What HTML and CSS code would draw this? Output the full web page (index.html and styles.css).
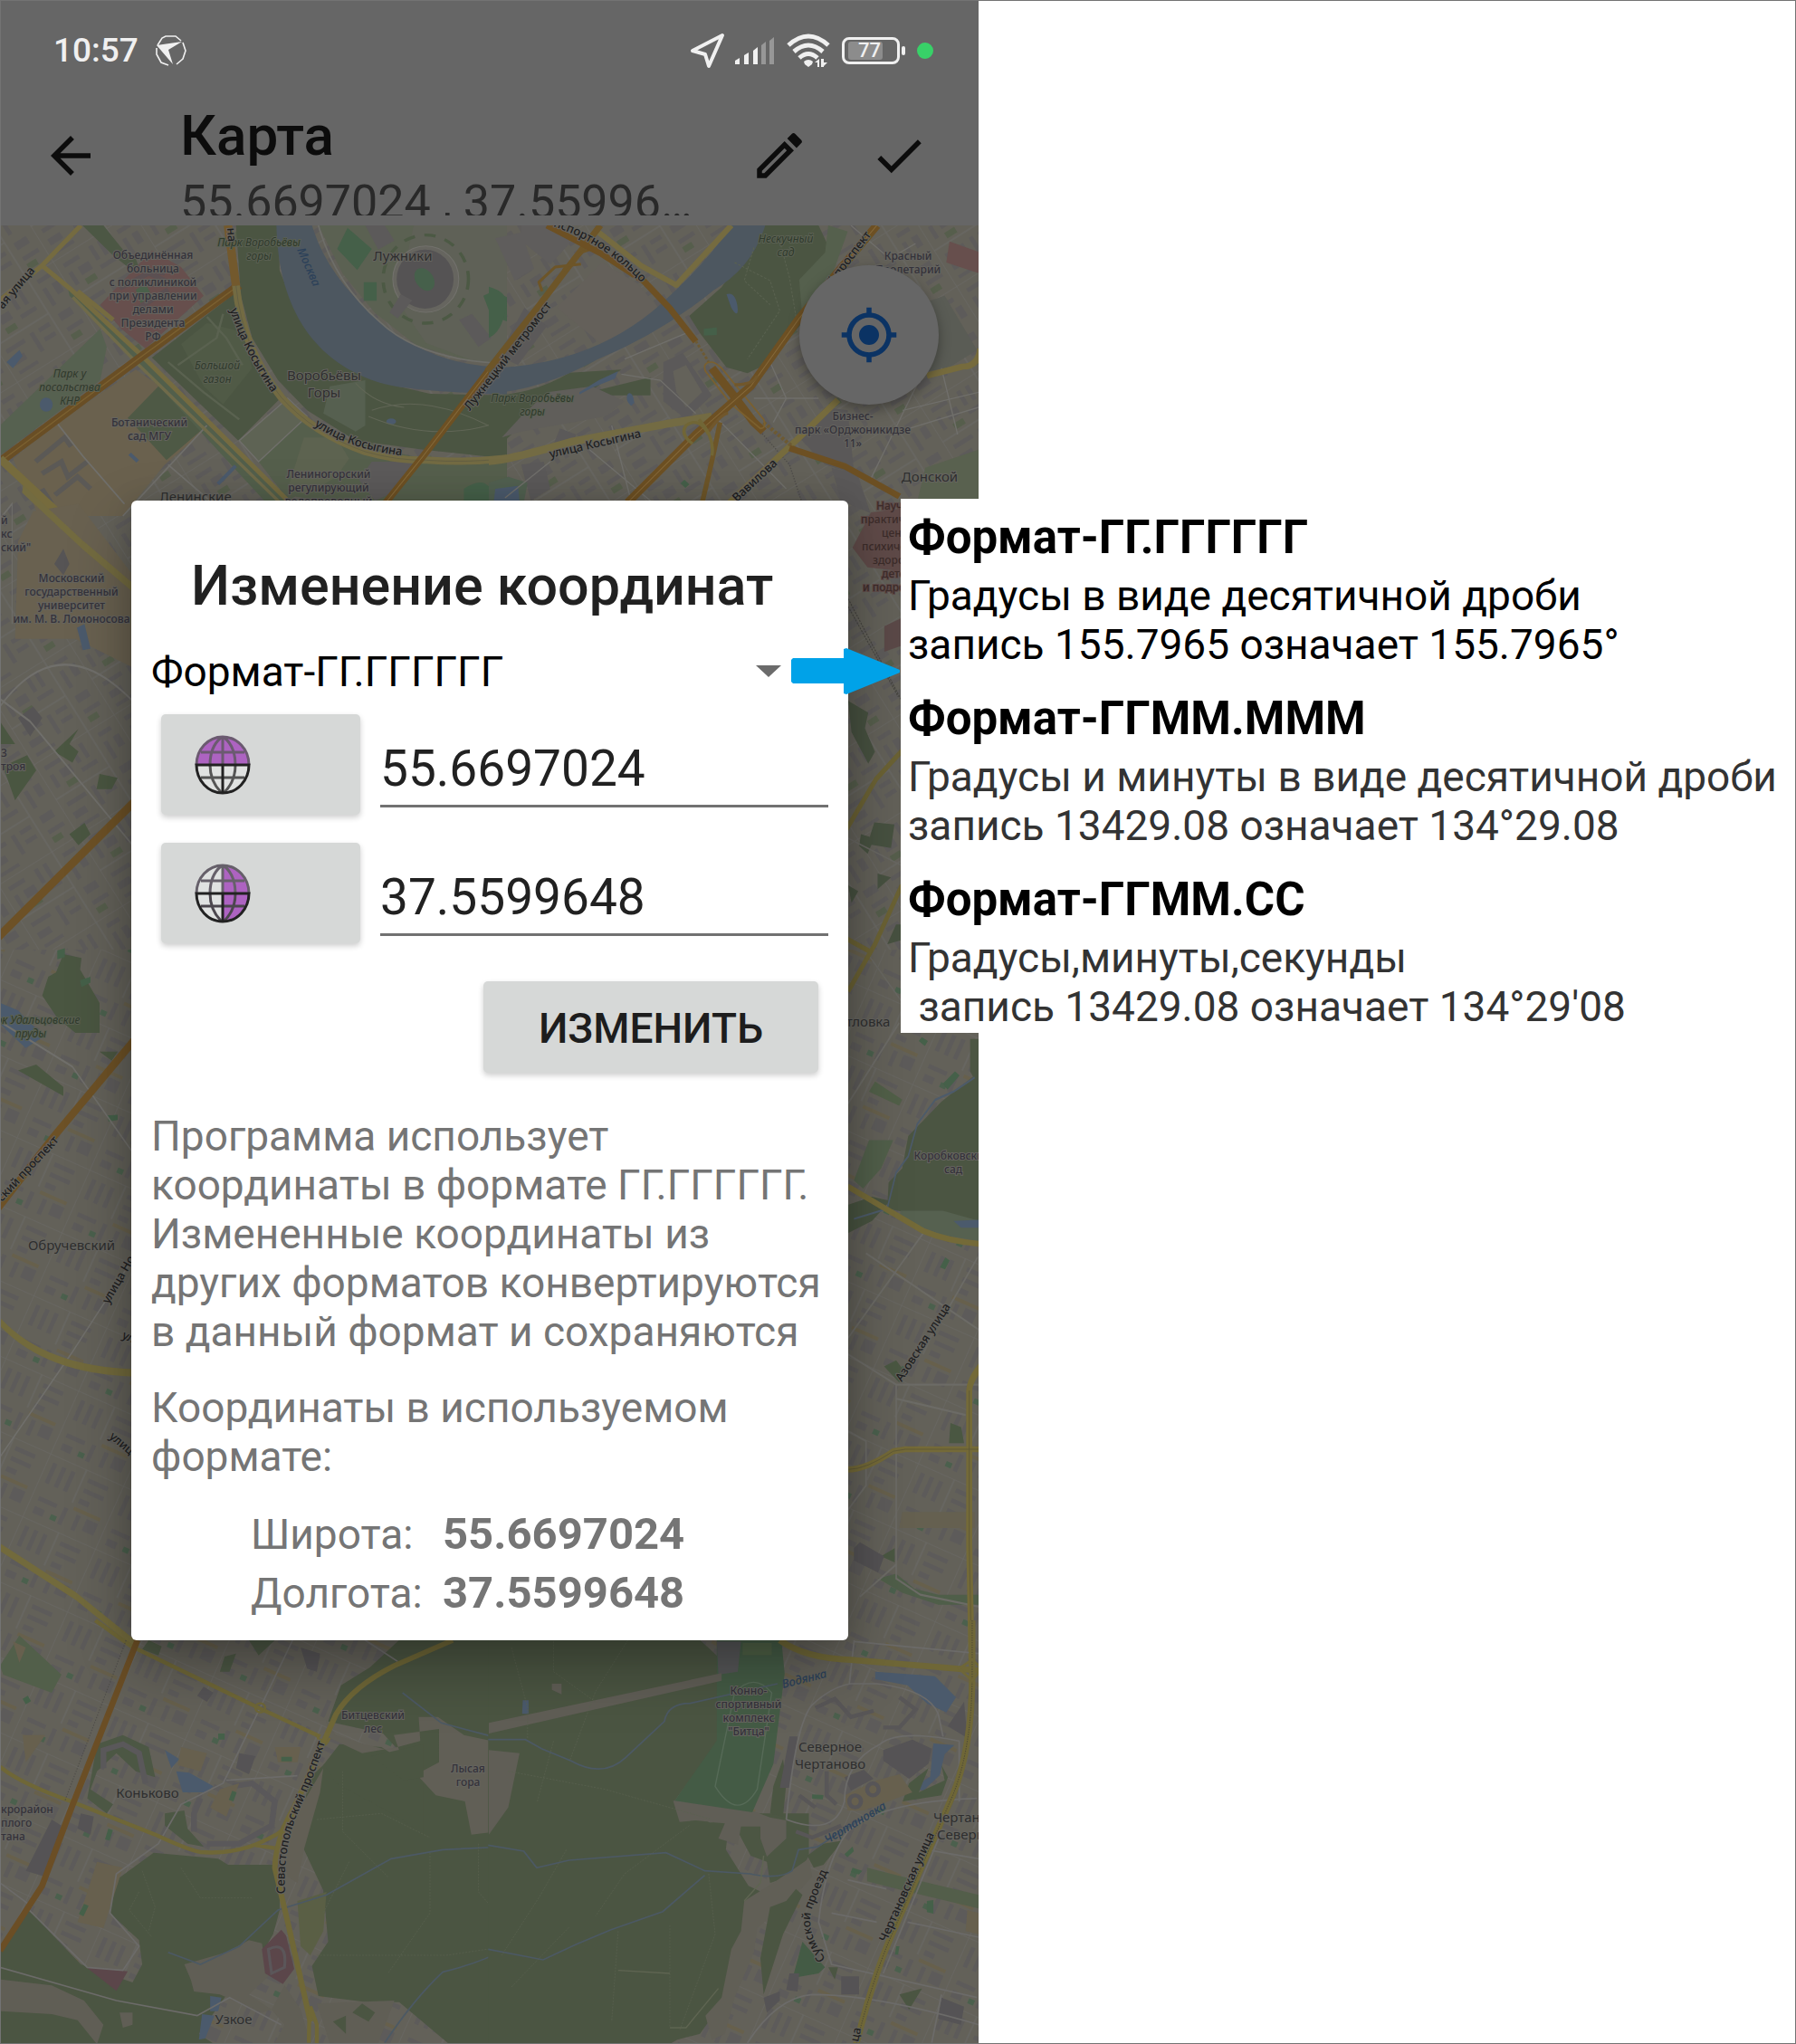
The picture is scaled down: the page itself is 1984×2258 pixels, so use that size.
FILE: index.html
```html
<!DOCTYPE html>
<html lang="ru">
<head>
<meta charset="utf-8">
<meta name="viewport" content="width=device-width, initial-scale=1">
<title>Карта</title>
<link rel="stylesheet" href="styles.css">
</head>
<body>
<div class="page">
<main class="phone">
  <header class="top">
    <div class="status">
      <span class="clock">10:57</span>
      <svg class="brand" width="36" height="36" viewBox="0 0 36 36"><path d="M3 12 8 4l4-2h11l6 5M31 9l3 9-3 9-7 6M15 34 7 31l-5-9v-7" fill="none" stroke="#f0f0f0" stroke-width="1.6"/><path d="M2 12 30 8 15 17l5 16z" fill="#f0f0f0"/></svg>
      <span class="spacer"></span>
      <svg width="40" height="40" viewBox="0 0 40 40"><path d="M36 3 3 20l14 4 4 13z" fill="none" stroke="#f0f0f0" stroke-width="4" stroke-linejoin="round"/></svg>
      <svg class="signal" width="46" height="32" viewBox="0 0 46 32"><path d="M1 31v-4l5-3v7zM11 31V21l5-3v13zM21 31V16l5-4v19z" fill="#f0f0f0"/><path d="M30 31V10l5-4v25zM39 31V5l5-4v30z" fill="#979797"/></svg>
      <svg class="wifi" width="48" height="38" viewBox="0 0 48 38"><g fill="none" stroke="#f0f0f0" stroke-width="5"><path d="M2 13Q24-7 46 13"/><path d="M8 20q16-14 32 0"/><path d="M14 27q10-9 20 0"/></g><path d="M19 31q5-4 10 0l-1 3-4 3-4-3zM31 32l5-4v9h-2v-5zm7-4h3v4l4 0-4 4v1h-3z" fill="#f0f0f0"/></svg>
      <span class="battery"><span>77</span></span>
      <span class="live"></span>
    </div>
    <div class="appbar">
      <button class="icon" aria-label="Назад"><svg viewBox="0 0 24 24"><path d="M20 11H7.83l5.59-5.59L12 4l-8 8 8 8 1.410-1.410L7.830 13H20z"/></svg></button>
      <div class="heading">
        <h1>Карта</h1>
        <p>55.6697024 , 37.55996…</p>
      </div>
      <button class="icon" aria-label="Редактировать"><svg viewBox="0 0 24 24"><path fill-rule="evenodd" d="M3 17.250V21h3.750L17.810 9.940l-3.750-3.750zM5.920 19H5v-.92l9.060-9.060.92.92zM20.710 5.630l-2.340-2.340a1 1 0 0 0-1.410 0l-1.830 1.830 3.750 3.750 1.830-1.830a1 1 0 0 0 0-1.410z"/></svg></button>
      <button class="icon" aria-label="Готово"><svg viewBox="0 0 24 24"><path d="M9 16.170 4.830 12l-1.420 1.410L9 19 21 7l-1.410-1.410z"/></svg></button>
    </div>
  </header>

  <section class="map">
    <svg class="tiles" viewBox="1 249 1080 2008" preserveAspectRatio="xMidYMin slice" aria-hidden="true">
      <defs>
        <pattern id="city" width="104" height="92" patternUnits="userSpaceOnUse" patternTransform="rotate(-32)">
          <path d="M0 0H104M0 46H70M0 0V92M70 0V92" stroke="#696863" stroke-width="1.500" fill="none"/>
          <path d="M8 8h20v5H8zM8 20h5v16H8zM20 20h14v10H20zM42 7h5v18h-5zM53 7h5v18h-5zM42 31h20v5H42zM78 8h16v5H78zM78 20h5v22h-5zM90 20h8v14h-8zM8 55h24v5H8zM8 68h16v8H8zM40 54h5v24h-5zM51 54h14v5H51zM51 66h14v5H51zM78 52h16v9H78zM78 70h20v5H78zM8 83h24v4H8z" fill="#5d5b5a"/>
          <path d="M20 35h13v7H20zM78 79h12v7H78z" fill="#565e4c"/>
        </pattern>
        <pattern id="rows" width="88" height="76" patternUnits="userSpaceOnUse" patternTransform="rotate(24)">
          <path d="M0 0H88M0 0V76M44 0V40" stroke="#696863" stroke-width="1.500" fill="none"/>
          <path d="M7 8h5v24H7zM18 8h5v24h-5zM29 8h5v24h-5zM50 8h24v5H50zM50 20h24v5H50zM50 32h12v6H50zM8 48h22v5H8zM8 60h12v8H8zM38 48h5v20h-5zM54 50h5v18h-5zM66 50h14v14H66z" fill="#5d5b5a"/>
          <path d="M28 61h7v6h-7z" fill="#4b604d"/>
          <path d="M48 43h32v4H48z" fill="#67604c"/>
        </pattern>
      </defs>
      <rect x="0" y="249" width="1082" height="2010" fill="#636159"/>
      <rect x="0" y="249" width="1082" height="800" fill="url(#city)"/>
      <rect x="0" y="1049" width="1082" height="1210" fill="url(#rows)"/>

      <g transform="translate(0 240) scale(.35714 .33333)">
        <path d="M255 27h65l60 80 40 30 20 60-30-20-60-50z" fill="#4c5744"/>
        <path d="M0 690 310 370l20 60-20 110L0 790z" fill="#566150"/>
        <path d="M180 680 420 505l75 55L640 700 510 820 380 990H120L40 800z" fill="#6a614e"/>
        <path d="m490 560 150 130-125 115-120-140z" fill="#4e5945"/>
        <path d="M210 235 440 455l200 230 260 270-60 10L430 490 215 260z" fill="#525f4b"/>
        <path d="M470 465 722 255l35 145 110 200-130 140z" fill="#4b5542"/>
        <path d="M560 420 640 350l110 30 30 120-90 120-60-60z" fill="#505a46"/>
        <path d="M640 330l60 70 50 90M520 480l110 100 110 90M690 320l-20 80-120 90" fill="none" stroke="#5a6250" stroke-width="7"/>
        <path d="M730 27h130l5 150 50 130 85 120 170 118 160 40 238 5v210l-258-30-210-30-150-100-90-100-80-140-35-140z" fill="#4b5542"/>
        <path d="M1020 560l110-20v150l-30 20-100-60z" fill="#566050"/>
        <path d="M940 660 800 810l80 110 120 20 568 50V800h-258l-210-50z" fill="#555f4c"/>
        <path d="M940 730l100 0 40 70-40 60-90 60-60-20z" fill="#5d6350"/>
        <path d="M1150 810h130l-60 100-60 30-50-70z" fill="#5c5a5a"/>
        <path d="M985 27h583v460l-128-15-150-45-130-110-100-130z" fill="#5b6152"/>
        <path d="M1280 27h288v460l-100-10-150-60-90-140z" fill="#5f6157"/>
        <path d="M855 27c5 240 90 440 315 520q80 30 398 40v-90q-240 0-408-167Q1010 190 965 27z" fill="#4d5760"/>
        <path d="M985 27q50 190 190 320 130 130 393 138" fill="none" stroke="#6e6e69" stroke-width="5"/>
        <g fill="#66655f" stroke="#72716c" stroke-width="3"><ellipse cx="1317" cy="205" rx="102" ry="110"/></g>
        <ellipse cx="1315" cy="205" rx="88" ry="98" fill="#555354"/>
        <ellipse cx="1313" cy="206" rx="28" ry="40" transform="rotate(-30 1313 206)" fill="#46604b"/>
        <g fill="none" stroke="#4c5944" stroke-width="10" stroke-dasharray="35 30"><ellipse cx="1317" cy="205" rx="132" ry="146"/></g>
        <path d="m1075 35 75 70-45 70-62-70zM1125 215h40v62h-40zM1495 260l30-15 43 20v80l-50-20zM1435 900q70-50 90 20l-20 70h-70z" fill="#456049"/>
        <path d="M1130 27h60l30 50-50 30zM1240 255l35 20-45 60-25-20zM1420 340l40-20 60 80-40 30z" fill="#5c5a5a"/>
        <path d="M310 290 470 110l90 55 70 95-180 175-75-65z" fill="#674f4d"/>
        <path d="m370 235 90-50 60 30M430 300l90-60M440 175l70 10" stroke="#5b5052" stroke-width="16" fill="none"/>
        <path d="m420 240 30-20 20 40-35 25z" fill="#4b604b"/>
        <path d="M20 480l40-40 10 20-30 40zM405 780l25 25-8 8-25-25zM670 880l55-60 8 8-55 60z" fill="#4b5a6c"/>
        <ellipse cx="143" cy="621" rx="20" ry="23" fill="#4b5a6c"/>
        <ellipse cx="1210" cy="677" rx="15" ry="10" fill="#4b5a6c"/>
        <path d="M110 810l90-80 20 30M130 850l60-40 20 50 60-50M170 920l70-60 40 40M130 900l30 50" fill="none" stroke="#5b5956" stroke-width="16"/>
        <path d="M740 740l150-140 60 60-150 150z" fill="#5e6354" stroke="#706f6b" stroke-width="4"/>
        <path d="M640 690 380 990M520 820l130 120M175 680l80 110 130 160M20 800l120 150" stroke="#706f6b" stroke-width="5" fill="none"/>
        <path d="M1150 640q160-60 360 50M1140 660q200 90 400 20M1100 550q60 70 150 80" stroke="#616656" stroke-width="3" fill="none"/>
        <g fill="none" stroke-linejoin="round">
          <path d="M0 275 130 160 250 27M130 160l85 75 225 225 460 490M240 245l110 95" stroke="#756b40" stroke-width="15"/>
          <path d="M225 265 430 490l440 460" stroke="#706b4a" stroke-width="10"/>
          <path d="M0 810 440 460 740 225" stroke="#694e25" stroke-width="28"/>
          <path d="M0 810 440 460 740 225" stroke="#7b6131" stroke-width="4"/>
          <path d="M0 800 190 990" stroke="#766b3d" stroke-width="26"/>
          <path d="M705 27l25 200" stroke="#73592d" stroke-width="26"/>
          <path d="M730 227q20 210 140 370 100 120 260 180 100 30 190 28 120 10 248-6" stroke="#736b43" stroke-width="24"/>
          <path d="M730 227q20 210 140 370 100 120 260 180 100 30 190 28 120 10 248-6" stroke="#5d5b43" stroke-width="2"/>
          <path d="M1575 420 1310 790 1190 950" stroke="#6d5023" stroke-width="22"/>
          <path d="M1575 420 1310 790 1190 950" stroke="#84693a" stroke-width="3"/>
        </g>
      </g>

      <g transform="translate(540 240) scale(.35714 .33333)">
        <path d="M100 27h140l10 60-60 70-90-80zM20 70l80-20 40 120-60 40z" fill="#5f5d5c"/>
        <path d="M350 150l110 70 70 90-170 120-150-130z" fill="#64605a"/>
        <path d="M110 300l70 60-90 130-60-30z" fill="#5b5959"/>
        <path d="M850 27h170l35 80-90 100 15 130-120 150-60 30-65-20-80-110-35-60 100-95z" fill="#4b5542"/>
        <path d="m1050 27 60 20-60 180-80 110-10-130 80-90z" fill="#55604d"/>
        <path d="M0 230q70 20 50 80-10 70-50 90z" fill="#456049"/>
        <path d="M0 590q130 0 250-75l160-10-100 75 190-50v60H380l-130 30-150 70-60 60-40 0z" fill="#4b5542"/>
        <path d="M180 580l140-20 100 50-60 50-260 50-60 20 60-70z" fill="#605e5a"/>
        <path d="M0 500q340-10 560-240 130-130 190-233h105q-40 140-160 215-160 140-360 230-170 100-335 113z" fill="#4d5760"/>
        <path d="M735 255q30-10 35 50 0 30-20-5zM280 580l60-40 60-30-10 25-70 30-40 22zM430 585q15-10 20 30l-10 10q-20-20-10-40z" fill="#4b5a6c"/>
        <path d="M1425 80l90 35v70l-100-35z" fill="#674f4d"/>
        <path d="m1330 290 80-30 100 180-90 60-60 10z" fill="#5a5c55"/>
        <path d="m1350 830 165-60v220h-200z" fill="#59614f"/>
        <path d="M960 730l80-100 70 10 20 210-90-30z" fill="#5a5858"/>
        <path d="M540 480l60-30 90 140-80 80-70-60zM220 700l50 20-20 60-60 0zM100 820l70-10 20 90-60 40zM1060 830l80 20 40 130-90-40z" fill="#5b5959"/>
        <path d="M570 510l40-20 50 90-50 50-30-50z" fill="#64625a"/>
        <path d="M0 880l60-20 60 20-20 110H0z" fill="#516050"/>
        <path d="M20 900l70-10 10 100H10z" fill="#4b5a6c"/>
        <path d="M665 370l40-5v25l-40 2zM605 870l15 15-12 12-15-15z" fill="#456049"/>
        <path d="M900 80l30 120 20 130M760 150l110 60 30 100-100 160M820 100l-30 110 80 80" stroke="#5a6250" stroke-width="3" stroke-dasharray="8 5" fill="none"/>
        <path d="M420 470 620 380M410 520l120 20 110 110M820 600h200M870 480l50 120-40 80M1120 27l120 110 80-50M1280 640l235-60M1300 700l215-70M1180 870l160-350M1400 500l50 220M380 690l60 250M190 810l-140 120M300 760l200 180M700 660l220 240" stroke="#706f6b" stroke-width="4" fill="none"/>
        <path d="M840 710l90 110 40 130" stroke="#4e4c49" stroke-width="4" stroke-dasharray="4 5" fill="none"/>
        <g fill="none" stroke-linejoin="round">
          <path d="M750 27 580 225 470 160 340 50" stroke="#756b40" stroke-width="18"/>
          <path d="M0 808q50 0 260-65l290-58 140-25" stroke="#736b43" stroke-width="26"/>
          <path d="M745 945 960 730l120-125M1355 525l110-30q50 0 55-60" stroke="#766b3d" stroke-width="20"/>
          <path d="M345 27 235 180 150 300-5 510" stroke="#6d5528" stroke-width="20"/>
          <path d="M230 175l60-60 70-25M165 245l-10-30 50-50 80-10" stroke="#6d5528" stroke-width="9"/>
          <path d="M180 27l170 95 130 90 80 90 80 110" stroke="#6d5023" stroke-width="20"/>
          <path d="M640 410l40 70" stroke="#6d5a33" stroke-width="8" stroke-dasharray="9 6"/>
          <path d="M690 500l70 95 60 85 30 30" stroke="#6d5023" stroke-width="26"/>
          <path d="M850 680l100 90" stroke="#6d5a33" stroke-width="12" stroke-dasharray="9 6"/>
          <path d="M930 765l170 60 170 100" stroke="#6d5023" stroke-width="20"/>
          <path d="M690 480q-30 0-20 30l80 110 90 80q20 0 10-30l-130-170q-20-20-30-20z" stroke="#7b602f" stroke-width="5"/>
          <path d="M1200 27 960 335 810 560 640 720 430 945" stroke="#6d5023" stroke-width="26"/>
          <path d="M1200 27 960 335 810 560 640 720 430 945" stroke="#85693a" stroke-width="3"/>
          <path d="M760 555q60 0 70-30M740 650q-20 0-60 60" stroke="#71572c" stroke-width="10"/>
          <path d="M715 680q-20 110-55 265" stroke="#6d5528" stroke-width="15"/>
          <path d="M680 720q-30-60-70-30-20 30 20 60M650 670q50 60 40 120" stroke="#716636" stroke-width="10"/>
        </g>
      </g>

      <g transform="translate(0 540) scale(.33333 .8291)">
        <path d="M60 70 110 30l150-10 190 100v120l-200-40-200 0z" fill="#696150"/>
        <path d="M255 185l25-5 20 33-25 2zM0 685l60 10 85 35-60 15-80-30z" fill="#4b5a6c"/>
        <path d="M0 310l50 30-50 0zM10 370l80-15 30 20-70 40zM180 350l80-30-30 20 30 10-20 15zM330 380l60 5-20 15-50 0zM230 460l50-15 20 15-40 15zM160 650l90-20 80 55v40h-80l-60-20-50-30zM60 775l60-8 90 30v12zM210 620l60 5-10 35-80-10zM330 750l60 0-20 12z" fill="#4a5641"/>
        <path d="M190 615l25-3v12l-25 3zM265 655l35-5v8l-30 6zM355 835l35-1v7l-30 2z" fill="#456049"/>
        <path d="M60 305l50-15 30 15-40 25zM180 100l30-20 20 20-20 15z" fill="#565455"/>
        <path d="M0 40l40-20v160M0 280l100 30 350 170M0 710l240 60 210 120M0 290q200-110 450-3M0 1290l240-140 210-130" stroke="#706f6b" stroke-width="3" fill="none"/>
        <g fill="none">
          <path d="M75 0l200 75 175 60" stroke="#736b40" stroke-width="11"/>
          <path d="M0 595 450 415M0 955l170-88 280-135" stroke="#6d5126" stroke-width="14"/>
          <path d="M0 1110q150 65 450 68M0 1410l250 65 200 65" stroke="#726a3c" stroke-width="10"/>
        </g>
      </g>

      <g transform="translate(520 540) scale(.36996 .43365)">
        <path d="M1140 150l55-90 90-10v160l-100-10z" fill="#5f4a48"/>
        <path d="M1235 350l50-20v70l-50 15z" fill="#5b4948"/>
        <path d="M1127 540l60 30-10 40 30 60-20 30-50-80zM1205 850l60 5-10 60-70-10zM1165 880l40 10-20 40-25-20zM1127 1010l30 15-20 30zM1215 980l40 10-40 30zM1270 1110l14 0v40l-40 10z" fill="#475140"/>
        <path d="M1127 280l160 260M1127 300l150 230" stroke="#464540" stroke-width="3" stroke-dasharray="5 3" fill="none"/>
        <path d="M1127 890l160 70M1190 1190l100 120" stroke="#686762" stroke-width="4" fill="none"/>
        <path d="M1120 870 1210 740l80-75M1127 1280l80-120 80-150M1120 1145l75 35" stroke="#6b6234" stroke-width="13" fill="none"/>
      </g>

      <g transform="translate(930 1130) scale(.33333 .44643)">
        <path d="M425 40h30v120l-30-40zM440 130h15v370l-125-15-180-25 5-65 45-35 20-80 110-85z" fill="#4b5542"/>
        <path d="M20 450l80-20 60 10-60 50-80 30z" fill="#485340"/>
        <path d="M195 465l140 0 120 25v50l-120-15-145-40z" fill="#566150"/>
        <path d="M370 490l85-3v20l-60 0z" fill="#4b5a6c"/>
        <path d="M440 135l-70 35-60 20-60 60-30 80-40 40-30 90-110 25" stroke="#4d5b6a" stroke-width="5" fill="none"/>
        <path d="M110 145l90 45-10 15-100-35z" fill="#515f48"/>
        <path d="M90 290l80 0-40 70-60 50-30-20z" fill="#515f4a"/>
        <path d="M335 150l40-30 15 10-40 35zM265 35l20 10-10 12-20-12zM325 605l18-25 14 8-15 22zM270 1220h18v25h-18z" fill="#456049"/>
        <path d="M140 850l40-15 30 30-20 25zM360 990l35 10 10 40-50 0zM130 1320l45-20 0 35z" fill="#4a5742"/>
        <path d="M120 1375l60-12 60 37 80 15h135v25H320l-120-30z" fill="#4f5e49"/>
        <path d="M200 1210h240v40H190z" fill="#656050"/>
        <path d="M40 1300l20-15 80 35-20 40-80-30z" fill="#545254"/>
        <path d="M20 200 190 0M270 520 20 780M20 820l160 75h275M180 895v480l80 40 195 30M80 570l375 190M350 710l100-130M20 1010l60 25v110l-60 60M180 930l230 40M60 1420l120-80" stroke="#6c6b66" stroke-width="5" fill="none"/>
        <g stroke="#746a38" fill="none">
          <path d="M20 405l250 110q80 25 190 32" stroke-width="15"/>
          <path d="M20 1105q60 0 150-45l40-5h250" stroke-width="15"/>
          <path d="M460 850q-37 35-38 60v380l8 300" stroke-width="20"/>
        </g>
        <path d="M422 910v380l8 290M20 1105q60 0 150-45l40-5h250" stroke="#5a5538" stroke-width="2" fill="none"/>
      </g>

      <g transform="translate(0 1790) scale(.35714 .33333)">
        <path d="M0 150l60-100 130 130-30 60-150-60z" fill="#525f4a"/>
        <path d="M1240 60h330v1345h-180l-155-140-100 0-150-20-20-100 50-80-15-170-75-170 30-200 50-50 300 40-120-140-170-40 40-120 90-60z" fill="#4b5542"/>
        <path d="M1000 480l50-70 130 10 130 90 0 200-80-60-190-110-30-50z" fill="#4b5542"/>
        <path d="M0 1090l80-140 170 190 160 60 30-60-10-80-90-90-5-90 140-110 200 20 30 20 140 0 20 90 0 60-20 80-50 90-60 60-120 180 110 80 30 90-30 90H300l-40-80-100-60-160-20z" fill="#4b5542"/>
        <path d="M0 1190l160 20 100 50 60 80-20 65-60-80-80-20-160-10zM570 1140l130-40 70-40 40 10 20 110-60 60 70 50-30 10-130-60-80-10-10-40zM370 1300l40 0 0 40-30 10zM880 1210l50 80 30 110h-110l30-60-40-50zM980 1270l240-10-50 140h-150z" fill="#605e55"/>
        <path d="M1020 390l100 50 110-20 70-20-5-80 60 0 80 60 133 30v110l-30 180-80 10-20-110-90-20-60-70 70-40 0-110-140 20 20 60-110-30-90-30-30-50z" fill="#615f56"/>
        <path d="M1150 450l160-40 0 110-60 10zM1090 1300l30-30 40 30-20 30zM1030 1330l40-20 0 60z" fill="#4b5542"/>
        <path d="M940 600l60-110-10 80-50 190-20 110-30-20-20-100 20-70z" fill="#625f55"/>
        <path d="M920 930l90-30-10 130-40 80-30-30z" fill="#5a5f45"/>
        <path d="M870 1025l15 20 25 110-35 50-55-35-10-80zM265 1148l130 15-35 65z" fill="#5b464a"/>
        <path d="M830 1090q60-30 50 60l-40 20z" fill="none" stroke="#5b5659" stroke-width="9"/>
        <path d="M510 430l45 30-25 30zM545 500l40 5 75 45-20 20h-75zM650 1245l35 5-10 45-25 0zM625 1305l38 5-28 75-20 5z" fill="#4b5a6c"/>
        <path d="M300 410l80-30 80 40 20 100-60-20-60-60-60 60-20 60 70 50-20 30-60-50zM510 640l60-10 10 60 50 60-50-10-70-60zM730 110l-20 60-30 0 15-50zM460 66l40 20-10 30-50-20zM770 66h80l-50 50z" fill="#4c5744"/>
        <path d="M320 490l0-60 60-20 50 30 20 100M600 700l0-60 20-50M640 740l100 0 100-60 10-80-70-60-60 10" fill="none" stroke="#5a585a" stroke-width="18"/>
        <path d="M250 640l40 10-10 60-40-20zM160 660l30 20-50 170-60-20zM930 90l60 20-10 60-30-10zM630 220l30 20-20 30-30-20zM740 440l50 10-20 60-40-20z" fill="#555355"/>
        <path d="M560 420l80 20-20 60-70-20zM680 560l60-20-40 110-50-30zM850 420h80l-10 50h-60zM300 800l80 20-60 200-80-20zM70 380l70 0-60 90zM40 70l40 20-20 50z" fill="#67604e"/>
        <path d="M335 690l14 5-10 35-14-4zM870 452h33v15h-33zM718 565l14 5-10 30-14-5zM675 375h20v20h-20zM260 940l14 6-16 35-14-8zM70 260l16-10 10 18-16 10z" fill="#456049"/>
        <path d="M1245 240l120 100 140 40 70 25M1570 1085q-80 50-200 80-90 90-180 235M520 1100l100 40 120-60q70-70 120-120l150-50 200-120 160-30 200-10" stroke="#4c5964" stroke-width="5" fill="none"/>
        <path d="M905 66 800 300 690 540 560 610l-70 130-130 100-20 130 90 110-50 80-110-10L90 960M0 870l100 80M0 1150l360 110 250 50 100-60 160 90M1130 66l100 70M700 530l220-15" stroke="#6c6b69" stroke-width="5" fill="none"/>
        <path d="M440 830l40 120-20 80M560 820l60 100 160 0M430 900l-30 60 70 90M1060 500l0 200 140 150M980 660l200-20 150 80M1080 800l-80 170M980 1110h400l190-30M1330 770l0 200-130 200M1480 740l0 160 80 100" stroke="#5a6250" stroke-width="2" stroke-dasharray="6 4" fill="none"/>
        <g fill="none">
          <path d="M295 0l110 85 395 205 190 95M0 485q60 55 220 115l260 110q100 50 140 58 120 10 220-50 50-20 80-110l75-215M790 745l60 10" stroke="#6f6737" stroke-width="13"/>
          <path d="M1400 66 1220 150q-130 70-180 160l-130 310q-55 100-60 200l40 180 70 330" stroke="#6f6737" stroke-width="17"/>
          <path d="M955 1400q0-60 5-120l20 60 0 65" stroke="#6f6737" stroke-width="12"/>
          <path d="M1020 390q-20 50-40-10" stroke="#6f6737" stroke-width="7"/>
          <ellipse cx="805" cy="290" rx="15" ry="15" stroke="#6f6737" stroke-width="7"/>
          <path d="M425 66 225 610 130 880 0 1095" stroke="#6b4e25" stroke-width="19"/>
          <path d="M390 66 200 600" stroke="#4e4c49" stroke-width="3" stroke-dasharray="4 5"/>
        </g>
      </g>

      <g transform="translate(540 1790) scale(.35714 .33333)">
        <path d="M-2 60h650l70 70 5 250-150 220 110 70 60 0-10 90 70 120 40 20-20 120-60 120-10 60-40 80-60 90-70 20-50 30H-2z" fill="#4b5542"/>
        <path d="M730 640l260 0 0 140-30 60-90 30-10-70-50-20-40-80z" fill="#4c5643"/>
        <path d="M570 598l250 35 50 20 50 10v60l-60 60-20-60 0-40-60 0-10 60-60-20 20-50-90-10-50 5z" fill="#605e56"/>
        <path d="M880 870l110-80 10 60-70 80-100 90-10 80-60 150-30 120-40 20-20-80 50-60 30-160 30-60 10-100z" fill="#615f56"/>
        <path d="M870 950l50-20 30-40 20 20-60 130-60 200-10-120zM985 780l50-40 60-10-60 80-30 10z" fill="#4b5542"/>
        <path d="M705 66h200l10 110-35 300-65 160-240-38 130-200z" fill="#445b45"/>
        <path d="M705 70l75 0-10 100-60 10z" fill="#555657"/>
        <path d="M785 75h90v40h-90z" fill="#4f6146"/>
        <path d="M700 550l60-310q60-70 115 0l-45 320q-60 110-130-10z" fill="none" stroke="#566a57" stroke-width="4"/>
        <path d="M0 340l720-165v25L0 375zM195 210l30 0 0 35-30-15zM0 430l95 10-35 180-60 90z" fill="#605e56"/>
        <path d="M105 265h18v45l-20 0zM1195 170l185 15 65 70-30 50-60-30-60-60-100-20zM1375 408l65 5-30 30-15 70-50 50-40-5 60-40z" fill="#4b5a6c"/>
        <path d="M1300 540l60-50-30 80 80-40-10-50 20 40-20 60-120 20z" fill="#4a5742"/>
        <path d="M880 550l30-90 10 80-10 110-40-10zM1270 1240l70-20-40 70zM1050 1150l30 0-10 40z" fill="#4b5542"/>
        <path d="M970 1065l70 85-20 20-80 15z" fill="#445b45"/>
        <path d="M1170 820l110 30 235 60v45l-235-60-110-30z" fill="#535e4a"/>
        <path d="M1100 580l100-50 70-20 40 60-150 60-50 0zM1480 960l35 10v70l-40-10z" fill="#67604e"/>
        <path d="M1220 430l90-35 60 30-10 50-60 50-80-60zM1100 520l60-25 30 30-70 40zM930 385l25 0-25 170-30 0zM1090 1180h55v60h-55zM850 1250l50-20 0 30-40 40zM1400 1250l70 30-10 60-70-20zM930 1170l30 0-5 60-35-5zM1420 350l50-80 10 120z" fill="#555355"/>
        <path d="M1010 290l60-30 50 60 70-20M1270 255l50 40-50 60h-50M960 580l50 40M1045 500v80l30 30M950 700l50 20 90-40" fill="none" stroke="#585657" stroke-width="13"/>
        <path d="M1115 600a18 20 0 1 0 36 0 18 20 0 1 0-36 0M1170 560a18 20 0 1 0 36 0 18 20 0 1 0-36 0" fill="none" stroke="#575557" stroke-width="13"/>
        <path d="M1000 577l35 2-2 14-33-2zM1100 775l25-25 4 15-20 20zM1355 930l20-3v45l-20-5zM1125 820l30 10-10 12-25-8zM1260 1080h10l-4 28h-10z" fill="#456049"/>
        <path d="M920 660q30-320 80-380 60-60 120-70h80q160 20 190 100l15 75M920 660q150 60 180-60 0-130 110-190 60-50 245-10v200M1130 66l-15 145M1130 70l385 40M1510 590q-300 10-400 110-70 100-90 300l40 140 450 110M800 1400q90-150 200-160 200 0 515 100M1060 970l140 30M1110 860l120 30M1400 700l-180 470M1515 790l-160-30M1515 1050l-220-50M1400 1240l-30 160" stroke="#6c6b69" stroke-width="5" fill="none"/>
        <path d="M-2 395l115 0 50 30 90 40q100 60 170-10l120-120q10-60 80-60l270-65M-2 745l110 20 40 55 100-25 300-25 120 60 140 10q90 20 130-10l20-70 60-10 130-90M-2 1090l170 35 100-50 110-50 160-60 130-120" stroke="#4c5964" stroke-width="5" fill="none"/>
        <path d="M70 90l50 200 0 100M200 70l0 100 130 100M430 66l-100 170-80 230M560 1010v340M400 1030l-20 300M240 760l-80 150-120 200M60 500l300 60 330 100M200 400l-50 200M620 680l-200 160-90 140M70 1215l180-200M680 840l20 200-110 320" stroke="#5a6250" stroke-width="2" stroke-dasharray="6 4" fill="none"/>
        <path d="M850 780l-10 90-50 60M400 1160l160 10M560 1350h50l100-130" stroke="#5f6552" stroke-width="4" fill="none"/>
        <g fill="none">
          <path d="M900 66q80 60 220 65l395 35" stroke="#6f6737" stroke-width="20"/>
          <path d="M1495 0v180q0 240-60 400l-200 490q-50 130-100 340" stroke="#6f6737" stroke-width="20"/>
          <path d="M1495 0v180q0 240-60 400l-200 490q-50 130-100 340" stroke="#4e4a38" stroke-width="3" stroke-dasharray="4 4"/>
          <path d="M1455 160l40-30 30 30-30 40z" stroke="#6f6737" stroke-width="8"/>
        </g>
      </g>

      <defs>
        <path id="k1" d="M254 342Q268 388 306 442"/>
        <path id="k2" d="M347 470Q388 498 452 504"/>
        <path id="ring" d="M611 250Q672 270 720 324"/>
        <path id="sev" d="M315 2092Q312 2040 331 1998T364 1908"/>
        <path id="sum" d="M912 2164Q888 2132 898 2106T922 2050"/>
      </defs>
      <g class="label">
        <text x="169" y="286">Объединённая<tspan x="169" dy="15">больница</tspan><tspan x="169" dy="15">с поликлиникой</tspan><tspan x="169" dy="15">при управлении</tspan><tspan x="169" dy="15">делами</tspan><tspan x="169" dy="15">Президента</tspan><tspan x="169" dy="15">РФ</tspan></text>
        <text x="165" y="471">Ботанический<tspan x="165" dy="15">сад МГУ</tspan></text>
        <text x="363" y="528">Лениногорский<tspan x="363" dy="15">регулирующий</tspan><tspan x="363" dy="15">водопроводный</tspan></text>
        <text x="1003" y="287">Красный<tspan x="1003" dy="15">Пролетарий</tspan></text>
        <text x="942" y="464">Бизнес-<tspan x="942" dy="15">парк «Орджоникидзе</tspan><tspan x="942" dy="15">11»</tspan></text>
        <text x="79" y="643">Московский<tspan x="79" dy="15">государственный</tspan><tspan x="79" dy="15">университет</tspan><tspan x="79" dy="15">им. М. В. Ломоносова</tspan></text>
        <text x="1052" y="1281">Коробковский<tspan x="1053" dy="15">сад</tspan></text>
        <text x="412" y="1899">Битцевский<tspan x="412" dy="15">лес</tspan></text>
        <text x="517" y="1958">Лысая<tspan x="517" dy="15">гора</tspan></text>
        <text x="827" y="1872">Конно-<tspan x="827" dy="15">спортивный</tspan><tspan x="827" dy="15">комплекс</tspan><tspan x="827" dy="15">"Битца"</tspan></text>
      </g>
      <g class="label start">
        <text x="1" y="579">й<tspan x="1" dy="15">кс</tspan><tspan x="1" dy="15">ский"</tspan></text>
        <text x="1" y="836">3<tspan x="1" dy="15">троя</tspan></text>
        <text x="1" y="2003">крорайон<tspan x="1" dy="15">плого</tspan><tspan x="1" dy="15">тана</tspan></text>
      </g>
      <g class="label start clinic">
        <text x="968" y="563">Науч<tspan x="951" dy="15">практич</tspan><tspan x="974" dy="15">цен</tspan><tspan x="952" dy="15">психиче</tspan><tspan x="964" dy="15">здоро</tspan><tspan x="974" dy="15">дете</tspan><tspan x="953" dy="15">и подро</tspan></text>
      </g>
      <g class="label park">
        <text x="286" y="272">Парк Воробьёвы<tspan x="286" dy="15">горы</tspan></text>
        <text x="240" y="408">Большой<tspan x="240" dy="15">газон</tspan></text>
        <text x="77" y="417">Парк у<tspan x="77" dy="15">посольства</tspan><tspan x="77" dy="15">КНР</tspan></text>
        <text x="868" y="268">Нескучный<tspan x="868" dy="15">сад</tspan></text>
        <text x="588" y="444">Парк Воробьёвы<tspan x="588" dy="15">горы</tspan></text>
        <text x="42" y="1131">ок Удальцовские<tspan x="34" dy="15">пруды</tspan></text>
      </g>
      <g class="label district">
        <text x="445" y="288">Лужники</text>
        <text x="358" y="420">Воробьёвы<tspan x="358" dy="19">Горы</tspan></text>
        <text x="216" y="554">Ленинские</text>
        <text x="1027" y="532">Донской</text>
        <text x="79" y="1381">Обручевский</text>
        <text x="959" y="1134">тловка</text>
        <text x="163" y="1986">Коньково</text>
        <text x="258" y="2236">Узкое</text>
        <text x="917" y="1935">Северное<tspan x="917" dy="19">Чертаново</tspan></text>
        <text x="1070" y="2013">Чертаново<tspan x="1070" dy="19">Северное</tspan></text>
      </g>
      <g class="label street">
        <text><textPath href="#k1">улица Косыгина</textPath></text>
        <text><textPath href="#k2">улица Косыгина</textPath></text>
        <text><textPath href="#ring">нспортное кольцо</textPath></text>
        <text><textPath href="#sev">Севастопольский проспект</textPath></text>
        <text><textPath href="#sum">Сумской проезд</textPath></text>
        <text transform="translate(608 506) rotate(-13)">улица Косыгина</text>
        <text transform="translate(519 454) rotate(-52)">Лужнецкий метромост</text>
        <text transform="translate(920 316) rotate(-53)">й проспект</text>
        <text transform="translate(814 555) rotate(-43)">Вавилова</text>
        <text transform="translate(251 252) rotate(86)">на</text>
        <text transform="translate(3 342) rotate(-50)">ая улица</text>
        <text transform="translate(2 1328) rotate(-47)">ский проспект</text>
        <text transform="translate(120 1441) rotate(-60)">улица Но</text>
        <text transform="translate(134 1478) rotate(25)">ул</text>
        <text transform="translate(120 1588) rotate(40)">улиц</text>
        <text transform="translate(996 1527) rotate(-57)">Азовская улица</text>
        <text transform="translate(979 2146) rotate(-66)">Чертановская улица</text>
        <text transform="translate(948 2256) rotate(-78)">ца</text>
      </g>
      <g class="label water">
        <text transform="translate(328 276) rotate(66)">Москва</text>
        <text transform="translate(865 1865) rotate(-14)">Водянка</text>
        <text transform="translate(914 2037) rotate(-31)">Чертановка</text>
      </g>
    </svg>

    <button class="locate" aria-label="Моё местоположение"><svg viewBox="0 0 24 24"><path fill-rule="evenodd" d="M12 8a4 4 0 1 0 0 8 4 4 0 0 0 0-8zm8.940 3A9 9 0 0 0 13 3.060V1h-2v2.060A9 9 0 0 0 3.060 11H1v2h2.060A9 9 0 0 0 11 20.940V23h2v-2.060A9 9 0 0 0 20.940 13H23v-2zM12 19a7 7 0 1 1 0-14 7 7 0 0 1 0 14z"/></svg></button>

    <section class="dialog" role="dialog" aria-labelledby="dialog-title">
      <h2 id="dialog-title">Изменение координат</h2>
      <form>
        <div class="format">
          <select aria-label="Формат">
            <option>Формат-ГГ.ГГГГГГ</option>
            <option>Формат-ГГММ.МММ</option>
            <option>Формат-ГГММ.СС</option>
          </select>
          <span class="caret"></span>
        </div>
        <div class="field">
          <button type="button" class="raised" aria-label="Широта">
            <svg class="globe" viewBox="0 0 64 66"><path d="M2 33a30 31 0 0 1 60 0z" fill="#ad63c1"/><path d="M2 33a30 31 0 0 0 60 0z" fill="#e0e2e1"/><g fill="none"><path d="M3 33a29 31 0 0 1 58 0M32 2v31M8 19h48M18 33q0-20 12-30M46 33q0-20-12-30" stroke="#6b5a70" stroke-width="3"/><path d="M8 47h48M18 33q0 18 12 30M46 33q0 18-12 30" stroke="#555" stroke-width="3"/><path d="M3 33a29 31 0 0 0 58 0zM32 33v31" stroke="#222" stroke-width="3"/></g></svg>
          </button>
          <input type="text" value="55.6697024" aria-label="Широта">
        </div>
        <div class="field">
          <button type="button" class="raised" aria-label="Долгота">
            <svg class="globe" viewBox="0 0 64 66"><ellipse cx="32" cy="33" rx="30" ry="31" fill="#e0e2e1"/><path d="M32 2a30 31 0 0 1 0 62z" fill="#ad63c1"/><g fill="none"><path d="M3 33a29 31 0 0 1 58 0M32 2v31M8 19h48M18 33q0-20 12-30M46 33q0-20-12-30" stroke="#66606a" stroke-width="3"/><path d="M8 47h48M18 33q0 18 12 30M46 33q0 18-12 30" stroke="#4c474e" stroke-width="3"/><path d="M3 33a29 31 0 0 0 58 0zM32 33v31" stroke="#222" stroke-width="3"/></g></svg>
          </button>
          <input type="text" value="37.5599648" aria-label="Долгота">
        </div>
        <button type="button" class="raised submit">ИЗМЕНИТЬ</button>
      </form>
      <p>Программа использует координаты в формате ГГ.ГГГГГГ. Измененные координаты из других форматов конвертируются в данный формат и сохраняются</p>
      <p>Координаты в используемом формате:</p>
      <table>
        <tr><th>Широта:</th><td>55.6697024</td></tr>
        <tr><th>Долгота:</th><td>37.5599648</td></tr>
      </table>

      <svg class="arrow" width="121" height="52" viewBox="0 0 121 52"><path d="M2 11h56V1l3-1 59 24v3L61 51l-3-1V39H2l-2-2V13z" fill="#00a2e8"/></svg>
      <aside class="help">
        <h3>Формат-ГГ.ГГГГГГ</h3>
        <p class="current">Градусы в виде десятичной дроби<br>запись 155.7965 означает 155.7965°</p>
        <h3>Формат-ГГММ.МММ</h3>
        <p>Градусы и минуты в виде десятичной дроби<br>запись 13429.08 означает 134°29.08</p>
        <h3>Формат-ГГММ.СС</h3>
        <p>Градусы,минуты,секунды<br>&nbsp;запись 13429.08 означает 134°29'08</p>
      </aside>
    </section>
  </section>
</main>
</div>
</body>
</html>
```
FILE: styles.css
```css
* { box-sizing: border-box; }
body {
  margin: 0;
  background: #fff;
  font-family: Roboto, "Liberation Sans", sans-serif;
}
h1, h2, h3, p { margin: 0; }
button { border: 0; padding: 0; font-family: inherit; cursor: pointer; }
svg { display: block; }

.page {
  display: grid;
  grid-template-columns: minmax(0, 1080fr) minmax(0, 902fr);
  min-height: 100vh;
  border: 1px solid #737373;
  overflow: hidden;
}
.phone { display: flex; flex-direction: column; }

/* status bar and app bar */
.top { background: #666; height: 248px; }
.status {
  display: flex;
  align-items: center;
  height: 110px;
  padding: 0 50px 0 58px;
}
.clock { color: #f0f0f0; font-size: 37px; line-height: 44px; font-weight: 500; }
.brand { margin-left: 18px; }
.spacer { flex: 1; }
.signal { margin-left: 9px; }
.wifi { margin-left: 12px; }
.battery {
  position: relative;
  display: flex;
  align-items: center;
  width: 64px;
  height: 30px;
  margin-left: 13px;
  margin-right: 1px;
  padding: 2px 4px;
  border: 3px solid #f0f0f0;
  border-radius: 8px;
}
.battery span {
  width: 38px;
  padding-left: 11px;
  border-radius: 3px;
  background: #8c8c8c;
  color: #f0f0f0;
  font-size: 22px;
  line-height: 20px;
  font-weight: 500;
}
.battery::after {
  content: "";
  position: absolute;
  right: -9px;
  top: 7px;
  width: 4px;
  height: 10px;
  border-radius: 2px;
  background: #f0f0f0;
}
.live { width: 18px; height: 18px; margin-left: 18px; border-radius: 50%; background: #38d168; }

.appbar {
  display: flex;
  align-items: flex-start;
  height: 138px;
  padding: 4px 55px 0 44px;
}
.icon { flex: none; width: 66px; height: 66px; margin-top: 24px; background: none; }
.icon svg { width: 66px; height: 66px; fill: #0c0c0c; }
.icon + .icon { margin-left: 66px; }
.heading { flex: 1; min-width: 0; padding-left: 88px; }
.heading h1 { color: #0c0c0c; font-size: 62px; line-height: 70px; font-weight: 500; }
.heading p {
  height: 44px;
  margin-top: 9px;
  overflow: hidden;
  white-space: nowrap;
  color: #292929;
  font-size: 52px;
  line-height: 60px;
}

/* map */
.map { position: relative; flex: 1; padding: 304px 144px 445px; }
.tiles { position: absolute; inset: 0; width: 100%; height: 100%; }
.label {
  font-family: "Noto Sans", sans-serif;
  font-size: 12px;
  font-weight: 500;
  text-anchor: middle;
  fill: #34323a;
  stroke: #65645f;
  stroke-width: 2px;
  paint-order: stroke;
}
.start { text-anchor: start; }
.clinic { fill: #3c2c2a; stroke: #5f4a48; }
.park { font-style: italic; font-weight: 400; fill: #2f3a2c; stroke: #5a6052; }
.district { font-size: 15px; font-weight: 400; fill: #2e2e2e; }
.street { font-size: 13px; text-anchor: start; fill: #1f1f1f; }
.water { font-size: 13px; font-style: italic; text-anchor: start; fill: #2c4159; stroke: none; }

.locate {
  position: absolute;
  top: 44px;
  right: 44px;
  display: grid;
  place-items: center;
  width: 154px;
  height: 154px;
  border-radius: 50%;
  background: #666;
  box-shadow: 0 5px 14px rgba(0, 0, 0, .35);
}
.locate svg { width: 66px; height: 66px; fill: #0b3364; }

/* dialog */
.dialog {
  position: relative;
  padding: 58px 22px 20px;
  border-radius: 6px;
  background: #fff;
  color: #757575;
  box-shadow: 0 28px 70px rgba(0, 0, 0, .3), 0 0 30px rgba(0, 0, 0, .12);
}
.dialog h2 {
  padding-left: 44px;
  color: #212121;
  font-size: 61px;
  line-height: 72px;
  font-weight: 500;
  white-space: nowrap;
}
.format { position: relative; margin-top: 32px; }
.format select {
  display: block;
  width: 100%;
  height: 54px;
  padding: 0;
  border: 0;
  appearance: none;
  background: none;
  color: #000;
  font: 46px/54px Roboto, sans-serif;
}
.caret {
  position: absolute;
  right: 52px;
  top: 20px;
  border: solid transparent;
  border-width: 13px 14px 0;
  border-top-color: #6b6b6b;
  pointer-events: none;
}
.field { display: flex; gap: 22px; margin: 20px 0 31px 11px; }
.field + .field { margin-top: 0; }
.raised {
  border-radius: 5px;
  background: #d6d8d7;
  box-shadow: 0 3px 6px rgba(0, 0, 0, .2);
}
.field .raised { flex: none; width: 220px; height: 111px; padding-left: 36px; }
.globe { width: 64px; height: 66px; }
.field input {
  flex: 1;
  min-width: 0;
  height: 103px;
  padding: 20px 0 0;
  border: 0;
  border-bottom: 3px solid #717171;
  background: none;
  color: #212121;
  font: 55px/64px Roboto, sans-serif;
}
.submit {
  display: block;
  width: 370px;
  height: 101px;
  margin: 42px 11px 43px auto;
  padding-top: 2px;
  color: #1d1d1d;
  font-size: 46px;
  font-weight: 500;
}
.dialog p { font-size: 46px; line-height: 54px; }
.dialog p + p { margin-top: 30px; }
table { margin: 26px 0 0 110px; border-collapse: collapse; }
th, td { height: 65px; padding: 0; text-align: left; font-size: 46px; line-height: 54px; }
th { width: 212px; font-weight: 400; }
td { font-size: 49px; font-weight: 700; }

/* format notes beside the dialog */
.arrow { position: absolute; left: 729px; top: 163px; }
.help {
  position: absolute;
  left: 850px;
  top: -2px;
  width: 980px;
  padding: 10px 0 2px 8px;
  background: #fff;
  color: #333;
  white-space: nowrap;
}
.help h3 { margin: 22px 0 4px; color: #000; font-size: 51px; line-height: 66px; font-weight: 700; }
.help h3:first-child { margin-top: 0; }
.help .current { color: #000; }
```
